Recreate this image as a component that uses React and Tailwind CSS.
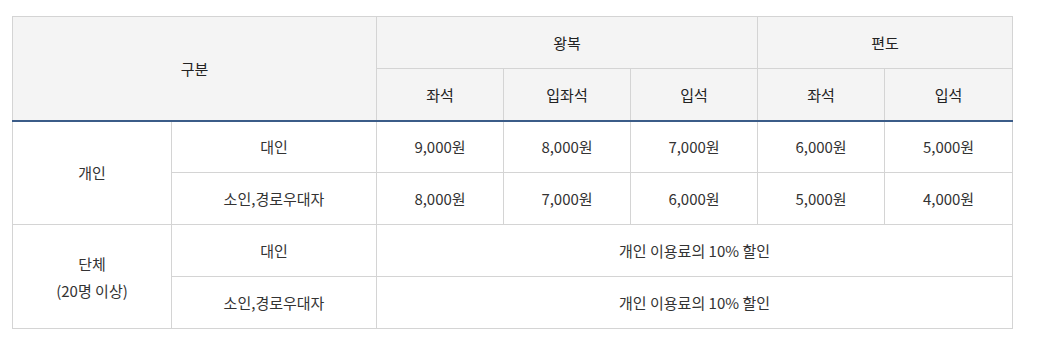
const cell = 'border border-[#d4d4d4] h-[52px] p-0 text-center align-middle font-normal';
const head = cell + ' bg-[#f4f4f4] text-[#222]';
const subHead = head + ' border-b-2 border-b-[#3b5c88]';

const prices = [
  { group: '개인', rows: [
    { who: '대인', cols: ['9,000원', '8,000원', '7,000원', '6,000원', '5,000원'] },
    { who: '소인,경로우대자', cols: ['8,000원', '7,000원', '6,000원', '5,000원', '4,000원'] },
  ] },
];

const App = () => {
  return (
    <div className="bg-white w-[1037px] h-[346px] pt-4 pl-3" style={{ fontFamily: '"Noto Sans CJK KR", "Noto Sans", sans-serif' }}>
      <table className="border-collapse table-fixed w-[1000px] text-[15px] text-[#333] leading-[27px]">
        <colgroup>
          <col className="w-[159px]" />
          <col className="w-[205px]" />
          <col className="w-[127px]" />
          <col className="w-[127px]" />
          <col className="w-[127px]" />
          <col className="w-[127px]" />
          <col className="w-[128px]" />
        </colgroup>
        <thead>
          <tr>
            <th colSpan={2} rowSpan={2} className={subHead}>구분</th>
            <th colSpan={3} className={head}>왕복</th>
            <th colSpan={2} className={head}>편도</th>
          </tr>
          <tr>
            <th className={subHead}>좌석</th>
            <th className={subHead}>입좌석</th>
            <th className={subHead}>입석</th>
            <th className={subHead}>좌석</th>
            <th className={subHead}>입석</th>
          </tr>
        </thead>
        <tbody>
          {prices.map(g =>
            g.rows.map((r, i) => (
              <tr key={g.group + r.who}>
                {i === 0 && <td rowSpan={g.rows.length} className={cell}>{g.group}</td>}
                <td className={cell}>{r.who}</td>
                {r.cols.map((c, j) => (
                  <td key={j} className={cell}>{c}</td>
                ))}
              </tr>
            ))
          )}
          <tr>
            <td rowSpan={2} className={cell}>단체<br />(20명 이상)</td>
            <td className={cell}>대인</td>
            <td colSpan={5} className={cell}>개인 이용료의 10% 할인</td>
          </tr>
          <tr>
            <td className={cell}>소인,경로우대자</td>
            <td colSpan={5} className={cell}>개인 이용료의 10% 할인</td>
          </tr>
        </tbody>
      </table>
    </div>
  );
};

export default App;
